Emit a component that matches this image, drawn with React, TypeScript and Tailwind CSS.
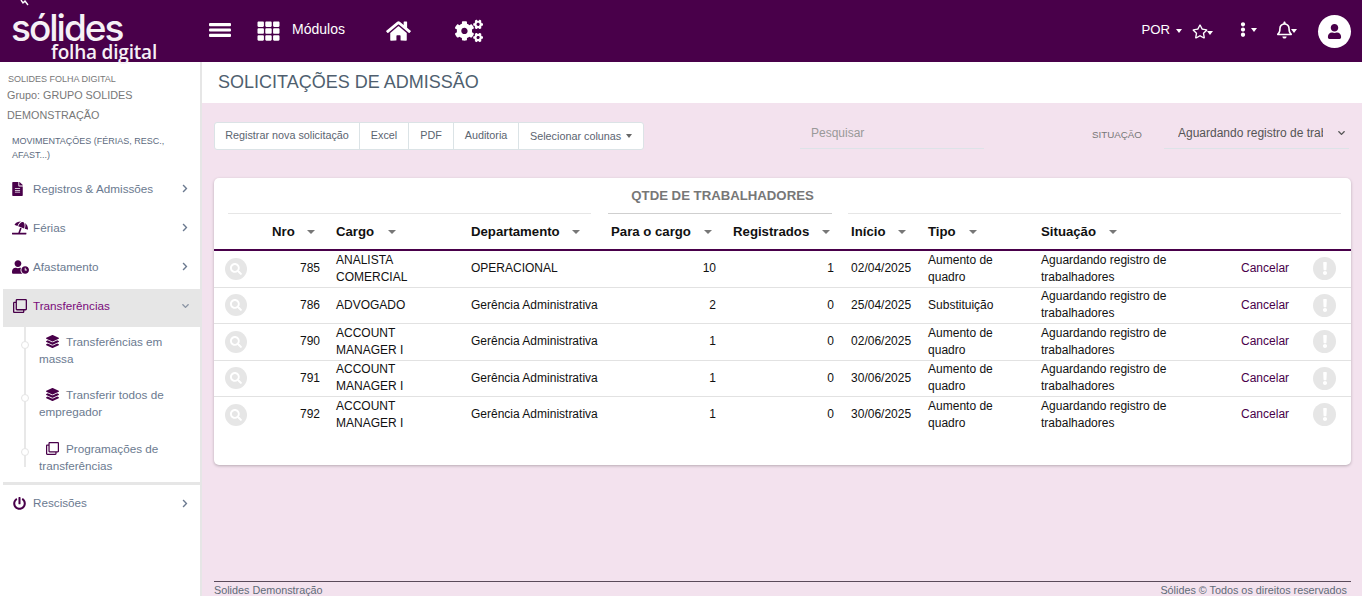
import type { ReactNode } from "react";
import {
  FaTh,
  FaHome,
  FaCogs,
  FaRegStar,
  FaEllipsisV,
  FaRegBell,
  FaUser,
  FaFileAlt,
  FaUmbrellaBeach,
  FaUserClock,
  FaRegClone,
  FaLayerGroup,
  FaPowerOff,
  FaChevronRight,
  FaChevronDown,
  FaSearch,
  FaExclamation,
} from "react-icons/fa";

const Caret = ({ className = "" }: { className?: string }) => (
  <span className={`inline-block w-0 h-0 border-x-[3.5px] border-x-transparent border-t-[4px] align-middle ${className}`} />
);

const rows = [
  { nro: 785, cargo: ["ANALISTA", "COMERCIAL"], dep: "OPERACIONAL", para: 10, reg: 1, ini: "02/04/2025", tipo: ["Aumento de", "quadro"], h: "h-[37px]" },
  { nro: 786, cargo: ["ADVOGADO"], dep: "Gerência Administrativa", para: 2, reg: 0, ini: "25/04/2025", tipo: ["Substituição"], h: "h-[36px]" },
  { nro: 790, cargo: ["ACCOUNT", "MANAGER I"], dep: "Gerência Administrativa", para: 1, reg: 0, ini: "02/06/2025", tipo: ["Aumento de", "quadro"], h: "h-[37px]" },
  { nro: 791, cargo: ["ACCOUNT", "MANAGER I"], dep: "Gerência Administrativa", para: 1, reg: 0, ini: "30/06/2025", tipo: ["Aumento de", "quadro"], h: "h-[36px]" },
  { nro: 792, cargo: ["ACCOUNT", "MANAGER I"], dep: "Gerência Administrativa", para: 1, reg: 0, ini: "30/06/2025", tipo: ["Aumento de", "quadro"], h: "h-[37px]" },
];

const columns = [
  { label: "Nro", cls: "pl-[58px]", gap: "ml-[12px]" },
  { label: "Cargo", cls: "pl-[8px]", gap: "ml-[14px]" },
  { label: "Departamento", cls: "pl-[8px]", gap: "ml-[12px]" },
  { label: "Para o cargo", cls: "pl-[8px]", gap: "ml-[13px]" },
  { label: "Registrados", cls: "pl-[8px]", gap: "ml-[13px]" },
  { label: "Início", cls: "pl-[8px]", gap: "ml-[13px]" },
  { label: "Tipo", cls: "pl-[8px]", gap: "ml-[13px]" },
  { label: "Situação", cls: "pl-[8px]", gap: "ml-[13px]" },
];

const menu = [
  { label: "Registros & Admissões", icon: <FaFileAlt className="w-[11px] h-[14px]" /> },
  { label: "Férias", icon: <FaUmbrellaBeach className="w-[16px] h-[14px]" /> },
  { label: "Afastamento", icon: <FaUserClock className="w-[17px] h-[14px]" /> },
];

function Header() {
  return (
    <header className="h-[62px] bg-[#49004a] text-white flex items-center shrink-0 relative">
      <div className="w-[200px] h-full relative shrink-0">
        <span className="absolute left-[11px] top-[13px] text-[37px] leading-[30px] font-medium font-['Inter',sans-serif] tracking-[-2px] text-[#f6f0f6]">sólides</span>
        <span className="absolute left-[51px] top-[43px] text-[19px] leading-[18px] font-semibold font-['Open_Sans',sans-serif] tracking-[-0.2px] text-[#f6f0f6]">folha digital</span>
      </div>
      <svg className="ml-[9px] -mt-[3px]" width="22" height="14" viewBox="0 0 22 14" fill="currentColor">
        <rect width="22" height="3.2" rx="1" />
        <rect y="5.4" width="22" height="3.2" rx="1" />
        <rect y="10.8" width="22" height="3.2" rx="1" />
      </svg>
      <FaTh className="w-[23px] h-[22px] ml-[26px]" />
      <span className="text-[14px] ml-[12px] -mt-[3px]">Módulos</span>
      <FaHome className="w-[25px] h-[22px] ml-[41px]" />
      <FaCogs className="w-[28px] h-[24px] ml-[44px]" />
      <div className="ml-auto flex items-center mr-[11px]">
        <span className="text-[13.2px] -mt-[3px]">POR</span>
        <Caret className="ml-[6px] border-t-white" />
        <FaRegStar className="w-[16px] h-[15px] ml-[10px]" />
        <Caret className="-ml-[1px] mt-[4px] border-t-white" />
        <FaEllipsisV className="w-[12px] h-[15px] ml-[24px] -mt-[3px]" />
        <Caret className="ml-[2px] -mt-[3px] border-t-white" />
        <FaRegBell className="w-[15px] h-[18px] ml-[20px] -mt-[3px]" />
        <Caret className="-ml-[1px] border-t-white" />
        <span className="w-[33px] h-[33px] ml-[21px] rounded-full bg-white flex items-center justify-center">
          <FaUser className="w-[15px] h-[15px] text-[#49004a]" />
        </span>
      </div>
      <svg className="absolute left-[20px] top-0" width="10" height="6" viewBox="0 0 10 6">
        <path d="M1 0 L3 3 L5 1 L8 5" fill="none" stroke="#fff" strokeWidth="1.4" />
      </svg>
    </header>
  );
}

function SubItem({ icon, a, b, h }: { icon: ReactNode; a: string; b: string; h: string }) {
  return (
    <div className={`relative ${h} pl-[36px] pt-[6px] text-[11.7px] leading-[17px]`}>
      <span className="absolute left-[18px] top-[14px] w-[8px] h-[8px] rounded-full bg-white border border-[#e4e4e4]" />
      <span className="inline-flex w-[27px] pl-[7px] text-[#49004a] align-[-2px]">{icon}</span>
      {a}
      <br />
      {b}
    </div>
  );
}

function Sidebar() {
  return (
    <aside className="w-[202px] shrink-0 bg-white border-r-[2px] border-[#e6e6e6] text-[#6b7a90] flex flex-col">
      <div className="pl-[8px] pt-[11px] text-[#777]">
        <div className="text-[9px] leading-[12px]">SOLIDES FOLHA DIGITAL</div>
        <div className="text-[10.8px] leading-[20px] -ml-[1px]">Grupo: GRUPO SOLIDES</div>
        <div className="text-[10.8px] leading-[20px] -ml-[1px]">DEMONSTRAÇÃO</div>
      </div>
      <div className="pl-[12px] mt-[9px] text-[9px] leading-[14px] text-[#5c6a7e]">
        MOVIMENTAÇÕES (FÉRIAS, RESC.,
        <br />
        AFAST...)
      </div>
      <nav className="mt-[7px]">
        {menu.map((m) => (
          <div key={m.label} className="h-[39px] flex items-center pl-[12px] pr-[11px] text-[11.7px]">
            <span className="w-[21px] flex justify-start text-[#49004a]">{m.icon}</span>
            <span>{m.label}</span>
            <FaChevronRight className="ml-auto w-[8px] h-[9px]" />
          </div>
        ))}
        <div className="ml-[3px] mt-[3px] h-[38px] pb-[4px] bg-[#e6e6e6] flex items-center pl-[10px] pr-[10px] text-[11.7px] text-[#7a0a7a]">
          <span className="w-[20px] text-[#49004a]"><FaRegClone className="w-[14px] h-[14px]" /></span>
          <span>Transferências</span>
          <FaChevronDown className="ml-auto w-[9px] h-[8px] text-[#8a94a3]" />
        </div>
        <div className="relative ml-[3px]">
          <div className="absolute left-[21px] top-0 bottom-[15px] w-[2px] bg-[#e8e8e8]" />
          <SubItem h="h-[53px]" icon={<FaLayerGroup className="w-[13px] h-[13px]" />} a="Transferências em" b="massa" />
          <SubItem h="h-[54px]" icon={<FaLayerGroup className="w-[13px] h-[13px]" />} a="Transferir todos de" b="empregador" />
          <SubItem h="h-[48px]" icon={<FaRegClone className="w-[13px] h-[13px]" />} a="Programações de" b="transferências" />
        </div>
        <div className="ml-[3px] h-[3px] bg-[#e6e6e6]" />
        <div className="h-[36px] flex items-center pl-[13px] pr-[11px] text-[11.7px]">
          <span className="w-[20px] text-[#49004a]"><FaPowerOff className="w-[13px] h-[13px]" /></span>
          <span>Rescisões</span>
          <FaChevronRight className="ml-auto w-[8px] h-[9px]" />
        </div>
      </nav>
    </aside>
  );
}

function Toolbar() {
  const btn = "h-[26px] flex items-center justify-center pb-[1px] border-r border-[#dbe3e6] shrink-0";
  return (
    <div className="flex items-start mt-[19px] ml-[12px] mr-[11px] h-[30px]">
      <div className="flex h-[28px] w-[430px] items-center bg-white border border-[#dbe3e6] rounded-[3px] text-[10.8px] text-[#5b6470]">
        <div className={`${btn} w-[145px]`}>Registrar nova solicitação</div>
        <div className={`${btn} w-[49px]`}>Excel</div>
        <div className={`${btn} w-[45px]`}>PDF</div>
        <div className={`${btn} w-[65px]`}>Auditoria</div>
        <div className="pl-[11px] flex items-center gap-[5px]">Selecionar colunas <Caret className="border-t-[#666]" /></div>
      </div>
      <div className="ml-[156px] w-[184px] h-[27px] border-b border-[#dde3e8] pl-[11px] text-[12px] leading-[22px] text-[#999]">Pesquisar</div>
      <div className="ml-auto flex items-start pr-[2px]">
        <span className="text-[9.8px] leading-[24px] text-[#777] mt-[1px]">SITUAÇÃO</span>
        <div className="ml-[22px] w-[185px] h-[27px] border-b border-[#dde3e8] pl-[14px] flex items-start text-[12px] leading-[22px] text-[#555]">
          <span className="w-[145px] overflow-hidden whitespace-nowrap">Aguardando registro de trabalhadores</span>
          <FaChevronDown className="ml-[14px] mt-[7px] w-[9px] h-[8px] text-[#555]" />
        </div>
      </div>
    </div>
  );
}

function DataTable() {
  return (
    <section className="ml-[12px] mr-[11px] mt-[26px] h-[287px] bg-white rounded-[5px] shadow-[0_1px_3px_rgba(0,0,0,0.25)] overflow-hidden">
      <table className="w-full table-fixed border-collapse text-[12px] text-[#111]">
        <colgroup>
          <col className="w-[114px]" />
          <col className="w-[135px]" />
          <col className="w-[140px]" />
          <col className="w-[122px]" />
          <col className="w-[118px]" />
          <col className="w-[77px]" />
          <col className="w-[113px]" />
          <col className="w-[200px]" />
          <col />
        </colgroup>
        <thead>
          <tr className="h-[36px]">
            <th colSpan={3} className="p-0 align-bottom"><div className="ml-[14px] mr-[12px] border-b border-[#e6e6e6]" /></th>
            <th colSpan={2} className="p-0 align-bottom">
              <div className="ml-[5px] mr-[11px] border-b border-[#cfcfcf] pb-[9px] pl-[5px] text-[13.2px] leading-[16px] font-bold text-[#777] text-center whitespace-nowrap">QTDE DE TRABALHADORES</div>
            </th>
            <th colSpan={4} className="p-0 align-bottom"><div className="ml-[5px] mr-[10px] border-b border-[#e6e6e6]" /></th>
          </tr>
          <tr className="h-[36px] border-b-[2px] border-[#49004a] text-left text-[13.2px] font-bold">
            {columns.map((c) => (
              <th key={c.label} className={`p-0 font-bold whitespace-nowrap ${c.cls}`}>
                <span>{c.label}</span>
                <Caret className={`${c.gap} border-x-[4px] border-t-[#777]`} />
              </th>
            ))}
            <th />
          </tr>
        </thead>
        <tbody>
          {rows.map((r, i) => (
            <tr key={r.nro} className={`${r.h} leading-[17px] ${i < rows.length - 1 ? "border-b border-[#e2e2e2]" : ""}`}>
              <td className="p-0">
                <div className="flex items-center">
                  <span className="ml-[11px] w-[22px] h-[22px] rounded-full bg-[#e6e6e6] flex items-center justify-center">
                    <FaSearch className="w-[12px] h-[12px] text-white" />
                  </span>
                  <span className="ml-auto mr-[8px]">{r.nro}</span>
                </div>
              </td>
              <td className="p-0 pl-[8px]">{r.cargo.map((l) => <div key={l}>{l}</div>)}</td>
              <td className="p-0 pl-[8px] whitespace-nowrap">{r.dep}</td>
              <td className="p-0 pr-[9px] text-right">{r.para}</td>
              <td className="p-0 pr-[9px] text-right">{r.reg}</td>
              <td className="p-0 pl-[8px]">{r.ini}</td>
              <td className="p-0 pl-[8px]">{r.tipo.map((l) => <div key={l}>{l}</div>)}</td>
              <td className="p-0 pl-[8px]">
                <div>Aguardando registro de</div>
                <div>trabalhadores</div>
              </td>
              <td className="p-0">
                <div className="flex items-center">
                  <span className="ml-[8px] text-[#49004a]">Cancelar</span>
                  <span className="ml-[24px] w-[23px] h-[23px] rounded-full bg-[#e6e6e6] flex items-center justify-center">
                    <FaExclamation className="w-[10px] h-[13px] text-white" />
                  </span>
                </div>
              </td>
            </tr>
          ))}
        </tbody>
      </table>
    </section>
  );
}

export default function App() {
  return (
    <div className="w-[1362px] h-[596px] overflow-hidden flex flex-col font-['Liberation_Sans',Arial,sans-serif] bg-[#f3e2ee]">
      <Header />
      <div className="flex flex-1 min-h-0">
        <Sidebar />
        <main className="flex-1 flex flex-col min-w-0">
          <div className="h-[41px] bg-white pl-[16px] text-[18px] leading-[40px] text-[#4f5f6f] shrink-0">SOLICITAÇÕES DE ADMISSÃO</div>
          <Toolbar />
          <DataTable />
          <div className="mt-auto ml-[12px] mr-[11px] h-[15px] border-t border-[#5a4a5a] flex justify-between text-[10.8px] leading-[17px] text-[#5f6b78]">
            <span>Solides Demonstração</span>
            <span className="pr-[4px]">Sólides © Todos os direitos reservados</span>
          </div>
        </main>
      </div>
    </div>
  );
}
